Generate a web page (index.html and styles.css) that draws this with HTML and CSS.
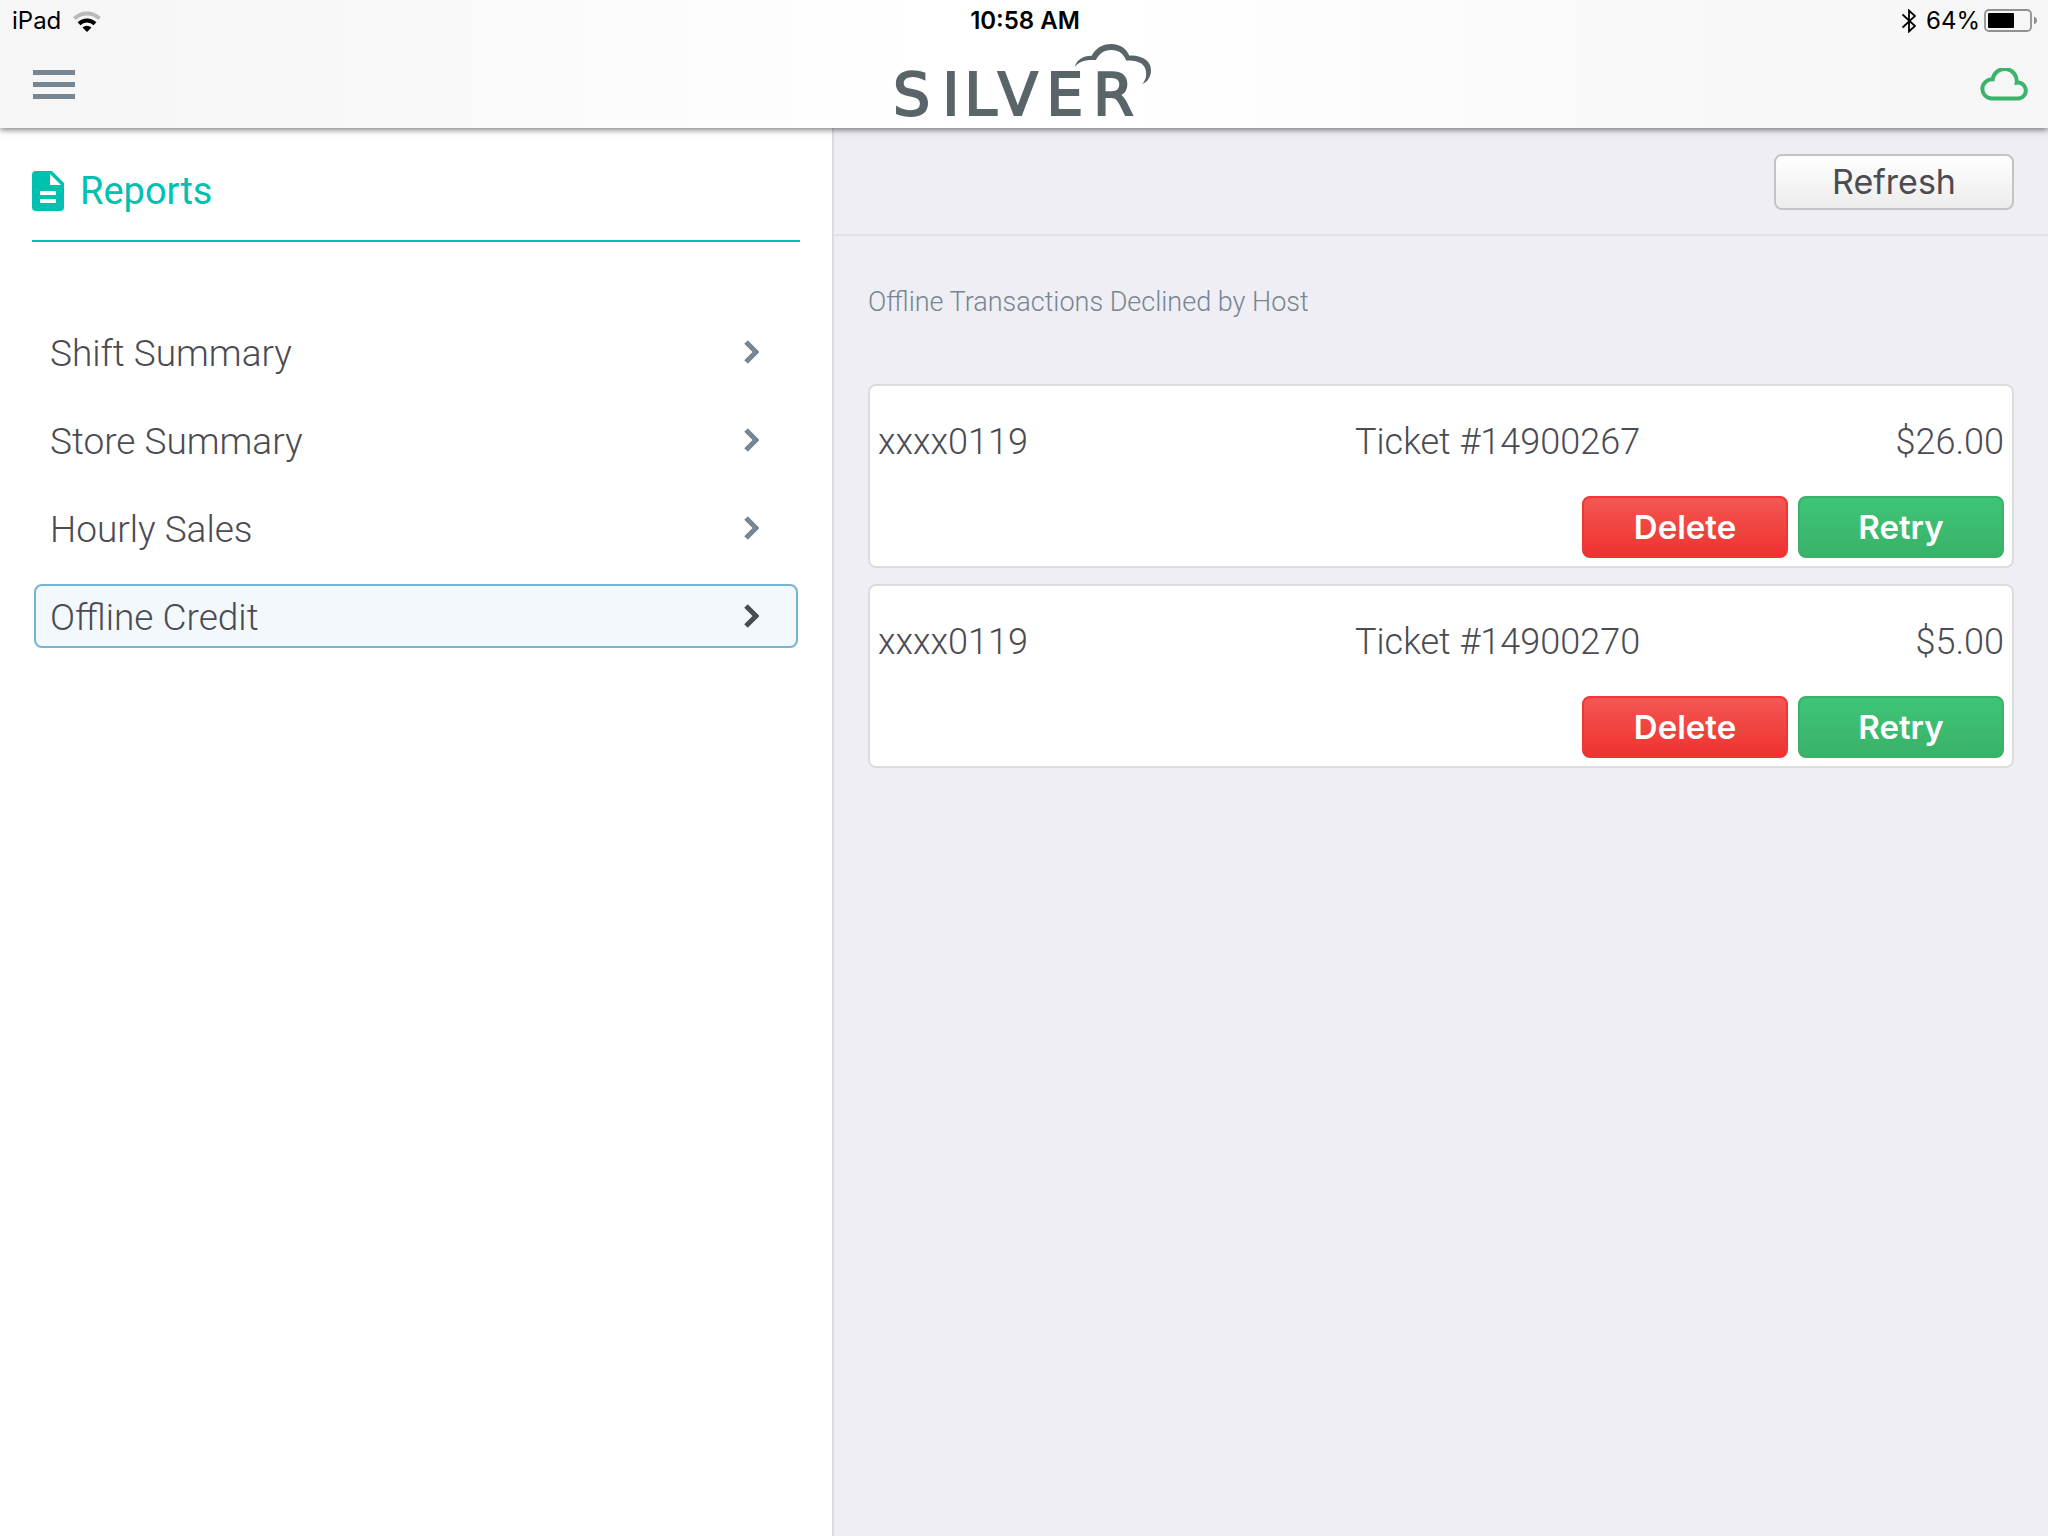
FILE: index.html
```
<!doctype html>
<html lang="en">
<head>
<meta charset="utf-8">
<meta name="viewport" content="width=device-width, initial-scale=1">
<title>Silver - Offline Credit</title>
<link rel="stylesheet" href="styles.css">
</head>

<body>
<header class="header">
	<div class="status">
		<div class="status_left">
			<span>iPad</span>
			<svg class="wifi" viewBox="0 0 28 21" width="28" height="21">
				<path d="M1.5 7.5A18 18 0 0 1 26.500 7.500" fill="none" stroke="#b9b9b9" stroke-width="4"/>
				<path d="M6 12.800A11.500 11.500 0 0 1 22 12.800" fill="none" stroke="#000" stroke-width="4"/>
				<path d="M9.500 16.500A6.500 6.500 0 0 1 18.500 16.500L14 21Z"/>
			</svg>
		</div>
		<div class="status_time">10:58 AM</div>
		<div class="status_right">
			<svg class="bluetooth" viewBox="0 0 14 24" width="14" height="24">
				<path d="M0.500 5.500L13 17L7 22.500V1.500L13 7L0.500 18.500" fill="none" stroke="#000" stroke-width="1.800"/>
			</svg>
			<span>64%</span>
			<svg class="battery" viewBox="0 0 54 24" width="54" height="24">
				<rect x="1" y="1" width="46" height="21" rx="4" fill="none" stroke="#919191" stroke-width="1.800"/>
				<rect x="4" y="4" width="26" height="15" rx="1"/>
				<path d="M50 7.500C54 9 54 14 50 15.500Z" fill="#919191"/>
			</svg>
		</div>
	</div>
	<div class="bar">
		<button class="menu_btn" type="button" aria-label="Menu">
			<span></span>
			<span></span>
			<span></span>
		</button>
		<svg class="logo" viewBox="54 126 822 252" width="274" height="84">
			<text x="72 220 286 386 532 672" y="344">SILVER</text>
			<path d="M617 201C622 181 640 167 668 167C680 145 700 132 727 132C754 132 773 147 781 167C822 165 846 185 846 210C846 230 836 246 820 252C830 240 833 228 831 215C828 192 808 180 772 182C764 162 750 150 727 150C704 150 690 162 681 180C650 179 630 184 617 201Z"/>
		</svg>
		<button class="cloud_btn" type="button" aria-label="Cloud status">
			<svg viewBox="360 202 144 99" width="48" height="33">
				<path d="M394 293.500A28.500 28.500 0 1 1 398 236A36 36 0 0 1 470 246A24 24 0 0 1 477 293.500Z" fill="none" stroke="#3bb36b" stroke-width="12"/>
			</svg>
		</button>
	</div>
</header>

<div class="main">
	<aside class="side">
		<h1 class="side_title">
			<svg viewBox="0 0 32 40" width="32" height="40">
				<path d="M4 0H20L32 12V36A4 4 0 0 1 28 40H4A4 4 0 0 1 0 36V4A4 4 0 0 1 4 0Z" fill="#00c1af"/>
				<path d="M18 3V14H29ZM8 20H24V24H8ZM8 28H24V32H8Z" fill="#fff"/>
			</svg>
			<span>Reports</span>
		</h1>
		<nav class="nav">
			<a href="#">
				<span>Shift Summary</span>
				<svg viewBox="0 0 15 24" width="15" height="24"><path d="M2 2L12 12L2 22"/></svg>
			</a>
			<a href="#">
				<span>Store Summary</span>
				<svg viewBox="0 0 15 24" width="15" height="24"><path d="M2 2L12 12L2 22"/></svg>
			</a>
			<a href="#">
				<span>Hourly Sales</span>
				<svg viewBox="0 0 15 24" width="15" height="24"><path d="M2 2L12 12L2 22"/></svg>
			</a>
			<a href="#" class="active">
				<span>Offline Credit</span>
				<svg viewBox="0 0 15 24" width="15" height="24"><path d="M2 2L12 12L2 22"/></svg>
			</a>
		</nav>
	</aside>

	<main class="content">
		<div class="tools">
			<button class="btn refresh" type="button">Refresh</button>
		</div>
		<section class="declined">
			<h2>Offline Transactions Declined by Host</h2>
			<ul class="list">
				<li class="card">
					<div class="card_info">
						<span>xxxx0119</span>
						<span>Ticket #14900267</span>
						<span class="amount">$26.00</span>
					</div>
					<div class="card_btns">
						<button class="btn delete" type="button">Delete</button>
						<button class="btn retry" type="button">Retry</button>
					</div>
				</li>
				<li class="card">
					<div class="card_info">
						<span>xxxx0119</span>
						<span>Ticket #14900270</span>
						<span class="amount">$5.00</span>
					</div>
					<div class="card_btns">
						<button class="btn delete" type="button">Delete</button>
						<button class="btn retry" type="button">Retry</button>
					</div>
				</li>
			</ul>
		</section>
	</main>
</div>
</body>
</html>
```
FILE: styles.css
```
*{margin:0; padding:0; box-sizing:border-box;}
body{min-height:100vh; display:flex; flex-direction:column; background:#fff; color:#4b4b52; font-family:Roboto, "Liberation Sans", sans-serif; font-weight:300;}
button{font:inherit; border:0; background:none; cursor:pointer;}
svg{display:block; flex:none;}
a{color:inherit; text-decoration:none;}
ul{list-style:none;}

.header{position:relative; z-index:1; background:linear-gradient(90deg, #f6f6f6, #f9f9f9 20%, #fff 45%, #fff 55%, #f9f9f9 80%, #f6f6f6); box-shadow:0 2px 6px rgba(0,0,0,.5);}
.status{display:grid; grid-template-columns:1fr auto 1fr; align-items:center; height:42px; padding:0 10px 0 12px; color:#000; font:400 24px/42px Inter, sans-serif;}
.status_left, .status_right{display:flex; align-items:center;}
.status_left{gap:12px;}
.status_right{justify-content:flex-end; gap:4px;}
.bluetooth{margin-right:6px;}
.status_time{font-weight:600;}

.bar{display:grid; grid-template-columns:1fr auto 1fr; align-items:center; height:86px; padding:0 20px 2px;}
.menu_btn{display:flex; flex-direction:column; gap:7px; width:42px; margin-left:13px;}
.menu_btn span{height:5px; background:#768692;}
.logo{fill:#5a6569; overflow:visible;}
.logo text{font:400 176px "DejaVu Sans", sans-serif; stroke:#5a6569; stroke-width:6;}
.cloud_btn{justify-self:end;}

.main{flex:1; display:grid; grid-template-columns:834fr 1214fr;}
.side{padding:32px 32px 0; border-right:2px solid #dbdbdf;}
.side_title{display:flex; align-items:center; gap:16px; height:82px; padding-bottom:18px; border-bottom:2px solid #00c1af; color:#00c1af; font-size:38px; font-weight:400; line-height:46px;}
.nav{display:flex; flex-direction:column; gap:24px; padding:78px 2px 0;}
.nav a{display:flex; align-items:center; justify-content:space-between; height:64px; padding:0 37px 0 14px; border:2px solid transparent; border-radius:8px; font-size:37px; line-height:46px;}
.nav span{padding-top:4px;}
.nav path{fill:none; stroke:#768692; stroke-width:5;}
.nav .active{border-color:#74b6d0; background:#f3f8fd;}
.nav .active path{stroke:#4b4b52;}

.content{background:#efeef4;}
.tools{display:flex; justify-content:flex-end; height:108px; padding:26px 34px 0; border-bottom:2px solid #e2e1e7;}
.declined{padding:48px 34px 0;}
.declined h2{margin-bottom:64px; color:#768692; font-size:27px; font-weight:300; line-height:36px;}
.list{display:flex; flex-direction:column; gap:16px;}
.card{height:184px; padding:34px 8px 8px; border:2px solid #dcdcdc; border-radius:8px; background:#fff;}
.card_info{display:grid; grid-template-columns:477fr 400fr 249fr; font-size:36px; line-height:44px;}
.amount{text-align:right;}
.card_btns{display:flex; justify-content:flex-end; gap:10px; margin-top:32px;}

.btn{border-radius:8px; font-family:Inter, sans-serif; text-align:center;}
.refresh{width:240px; height:56px; border:2px solid #c4c4c4; background:linear-gradient(#fff, #ececec); color:#4b4b52; font-size:34px; font-weight:400; line-height:52px;}
.delete, .retry{width:206px; height:62px; color:#fff; font-size:33px; font-weight:600; line-height:58px;}
.delete{border:2px solid #ef3535; background:linear-gradient(#f45752, #ef3230);}
.retry{border:2px solid #3ab26a; background:linear-gradient(#3ec577, #3ab26a);}
```
